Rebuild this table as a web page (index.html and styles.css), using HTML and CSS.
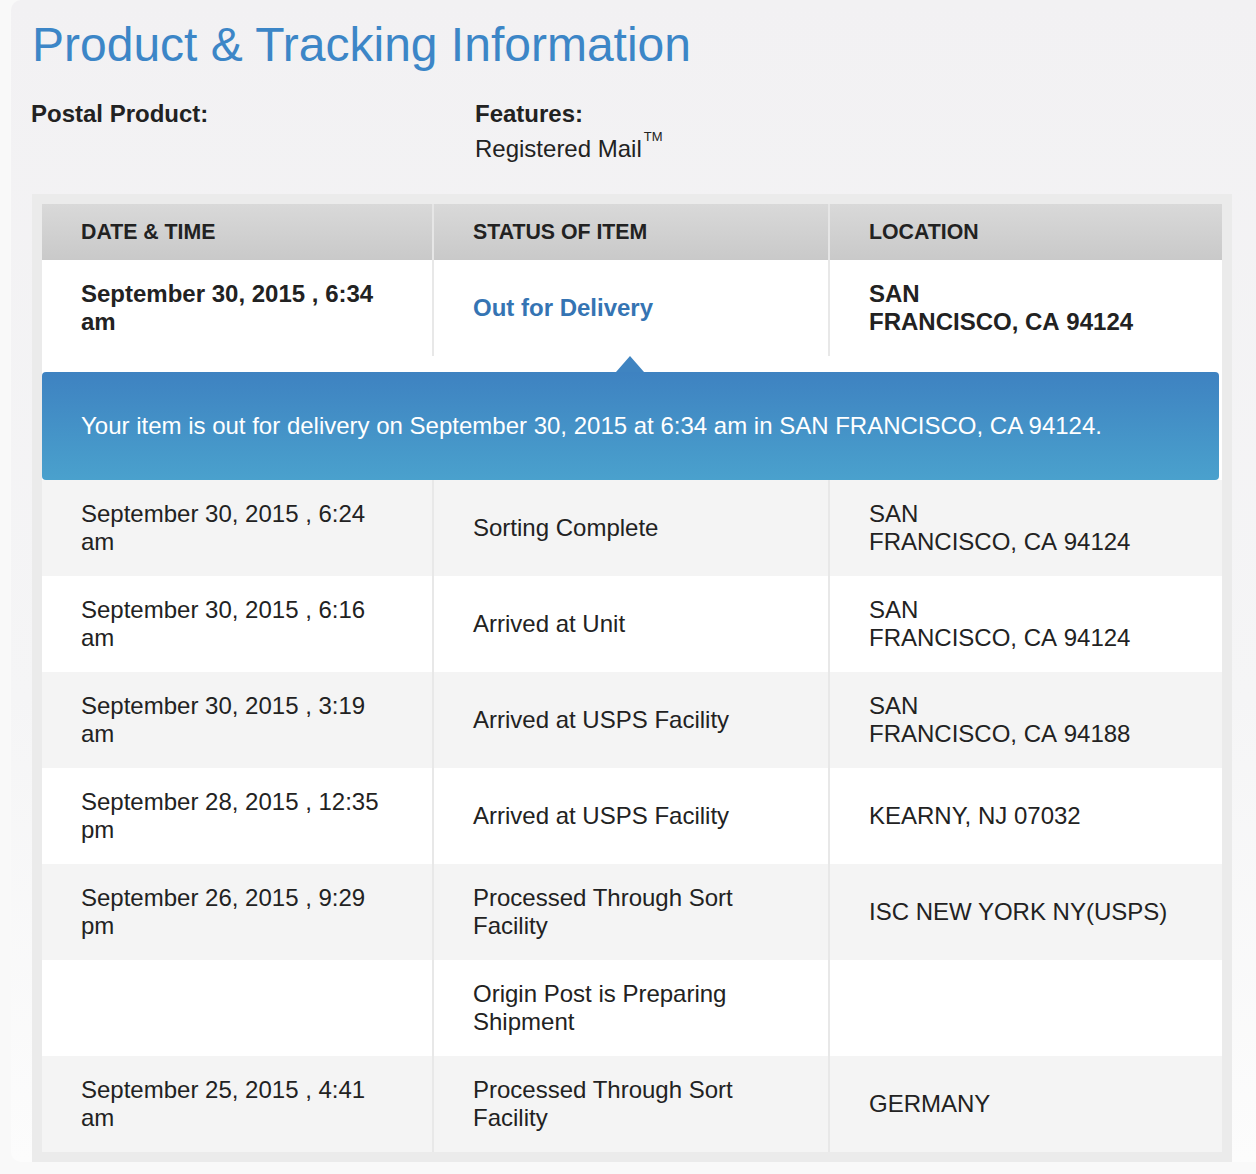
FILE: index.html
```html
<!DOCTYPE html>
<html lang="en">
<head>
<meta charset="utf-8">
<title>Product &amp; Tracking Information</title>
<link rel="stylesheet" href="styles.css">
</head>
<body>
<div class="card">
  <h1 class="title">Product &amp; Tracking Information</h1>
  <div class="info">
    <div class="info-col info-product">
      <div class="info-label">Postal Product:</div>
    </div>
    <div class="info-col">
      <div class="info-label">Features:</div>
      <div class="info-value">Registered Mail<sup class="tm">TM</sup></div>
    </div>
  </div>
  <div class="wrap">
    <div class="table">
      <div class="row head">
        <div class="cell">DATE &amp; TIME</div>
        <div class="cell">STATUS OF ITEM</div>
        <div class="cell">LOCATION</div>
      </div>
      <div class="row latest">
        <div class="cell"><span>September 30, 2015 , 6:34 am</span></div>
        <div class="cell"><span class="status-link">Out for Delivery</span></div>
        <div class="cell"><span>SAN FRANCISCO,&nbsp;CA&nbsp;94124</span></div>
      </div>
      <div class="detail">
        <div class="detail-box">Your item is out for delivery on September 30, 2015 at 6:34 am in SAN FRANCISCO, CA 94124.</div>
      </div>
      <div class="row alt">
        <div class="cell"><span>September 30, 2015 , 6:24 am</span></div>
        <div class="cell"><span>Sorting Complete</span></div>
        <div class="cell"><span>SAN FRANCISCO,&nbsp;CA&nbsp;94124</span></div>
      </div>
      <div class="row">
        <div class="cell"><span>September 30, 2015 , 6:16 am</span></div>
        <div class="cell"><span>Arrived at Unit</span></div>
        <div class="cell"><span>SAN FRANCISCO,&nbsp;CA&nbsp;94124</span></div>
      </div>
      <div class="row alt">
        <div class="cell"><span>September 30, 2015 , 3:19 am</span></div>
        <div class="cell"><span>Arrived at USPS Facility</span></div>
        <div class="cell"><span>SAN FRANCISCO,&nbsp;CA&nbsp;94188</span></div>
      </div>
      <div class="row">
        <div class="cell"><span>September 28, 2015 , 12:35 pm</span></div>
        <div class="cell"><span>Arrived at USPS Facility</span></div>
        <div class="cell"><span>KEARNY,&nbsp;NJ&nbsp;07032</span></div>
      </div>
      <div class="row alt">
        <div class="cell"><span>September 26, 2015 , 9:29 pm</span></div>
        <div class="cell"><span>Processed Through Sort Facility</span></div>
        <div class="cell"><span>ISC NEW YORK NY(USPS)</span></div>
      </div>
      <div class="row">
        <div class="cell"><span></span></div>
        <div class="cell"><span>Origin Post is Preparing Shipment</span></div>
        <div class="cell"><span></span></div>
      </div>
      <div class="row alt">
        <div class="cell"><span>September 25, 2015 , 4:41 am</span></div>
        <div class="cell"><span>Processed Through Sort Facility</span></div>
        <div class="cell"><span>GERMANY</span></div>
      </div>
    </div>
  </div>
</div>
</body>
</html>
```
FILE: styles.css
```css
html, body {
  margin: 0;
  padding: 0;
}

body {
  background: #f9f9f9;
  font-family: "Liberation Sans", Arial, Helvetica, sans-serif;
  color: #222222;
  height: 1174px;
  overflow: hidden;
}

.card {
  margin-left: 11px;
  padding: 17px 24px 0 20px;
  background: linear-gradient(to bottom, #f2f1f3 0%, #f5f5f6 60%, #fcfcfc 100%);
  border-radius: 10px 0 0 10px;
}

.title {
  margin: 0 0 0 1px;
  font-size: 48px;
  line-height: 56px;
  font-weight: normal;
  color: #3c86c7;
}

.info {
  display: flex;
  margin-top: 27px;
  font-size: 24px;
  line-height: 28px;
}

.info-product {
  width: 444px;
}

.info-label {
  font-weight: bold;
  color: #222222;
}

.info-value {
  padding-top: 7px;
  color: #222222;
}

.tm {
  font-size: 13px;
  line-height: 0;
  vertical-align: 0;
  position: relative;
  top: -16px;
  margin-left: 2px;
}

.wrap {
  margin-top: 31px;
  margin-left: 1px;
  background: #ebebeb;
  padding: 10px;
}

.table {
  width: 1180px;
}

.row {
  display: grid;
  grid-template-columns: 392px 396px 392px;
  height: 96px;
  background: #ffffff;
  font-size: 24px;
  line-height: 28px;
}

.row.alt {
  background: #f4f4f4;
}

.cell {
  display: flex;
  align-items: center;
  padding: 0 38px 0 39px;
  border-right: 2px solid #e8e8e8;
  box-sizing: border-box;
}

.cell:last-child {
  border-right: none;
}

.row.head {
  height: 56px;
  background: linear-gradient(to bottom, #d9d9d9, #c9c9c9);
  font-size: 21.3px;
  font-weight: bold;
  color: #222222;
}

.row.head .cell {
  border-right-color: #e6e6e6;
}

.row.latest {
  font-weight: bold;
}

.status-link {
  color: #3574b3;
}

.detail {
  position: relative;
  background: #ffffff;
  padding: 16px 3px 0 0;
}

.detail::before {
  content: "";
  position: absolute;
  left: 574px;
  top: 0;
  width: 0;
  height: 0;
  border-left: 14px solid transparent;
  border-right: 14px solid transparent;
  border-bottom: 16px solid #3f84c1;
}

.detail-box {
  height: 108px;
  box-sizing: border-box;
  display: flex;
  align-items: center;
  padding: 0 39px;
  border-radius: 4px;
  background: linear-gradient(to bottom, #3e82c1, #4aa1cd);
  color: #ffffff;
  font-size: 24px;
  line-height: 28px;
}
```
